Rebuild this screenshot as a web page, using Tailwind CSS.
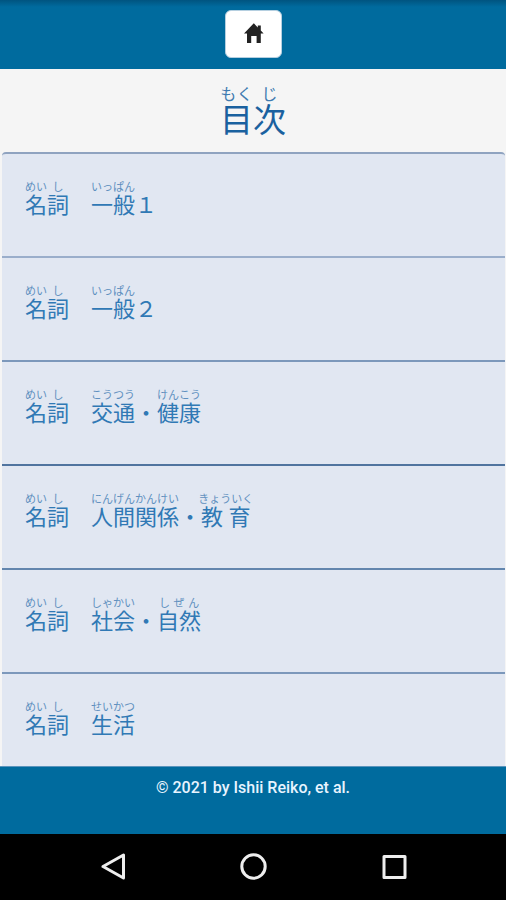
<!DOCTYPE html>
<html lang="ja">
<head>
    <meta charset="UTF-8">
    <meta name="viewport" content="width=device-width, initial-scale=1.0">
    <title>目次</title>
    <script src="https://cdn.jsdelivr.net/npm/@tailwindcss/browser@4"></script>
</head>
<body class="flex flex-col h-screen overflow-hidden bg-[#f5f5f5] font-['Roboto','Noto_Sans_CJK_JP',sans-serif]">

    <!-- Header -->
    <header class="flex shrink-0 justify-center bg-linear-to-b from-[#005480] to-[#006b9e] to-10% pt-[10px] pb-[11px]">
        <button type="button" aria-label="ホーム" class="flex items-center justify-center w-[57px] h-12 bg-white border border-[#b5cfe0] rounded-md">
            <svg class="w-6 h-6 text-[#222]" viewBox="0 0 24 24" fill="currentColor">
                <path d="M6 21V11.5H3L12.8 1.2l4 4.2V3.4h3v5.2l2.8 2.9h-2.8V21h-4.2v-7h-5.4v7z"/>
            </svg>
        </button>
    </header>

    <!-- Title -->
    <h1 class="shrink-0 h-[83px] pt-[30px] text-center text-[33px] leading-[44px] text-[#1a619f]">
        <ruby>目<rt class="text-[16px] leading-5 text-[#3f7bb0]">もく</rt></ruby><ruby>次<rt class="text-[16px] leading-5 text-[#3f7bb0]">じ</rt></ruby>
    </h1>

    <!-- Contents -->
    <main class="flex-1 min-h-0 overflow-hidden pl-[2px] pr-px">
        <ul class="text-[22px] leading-8 text-[#3079b5] rounded-t border-t-2 border-[#8fa3c0] bg-[#e1e7f2] overflow-hidden">
            <li class="border-b-2 border-[#9aaecb]">
                <a href="#" class="block h-[102px] px-[23px] pt-9"><ruby>名<rt class="text-[11px] leading-3 text-[#5f90bf]">めい</rt></ruby><ruby>詞<rt class="text-[11px] leading-3 text-[#5f90bf]">し</rt></ruby>　<ruby>一般<rt class="text-[11px] leading-3 text-[#5f90bf]">いっぱん</rt></ruby>１</a>
            </li>
            <li class="border-b-2 border-[#7c98bb]">
                <a href="#" class="block h-[102px] px-[23px] pt-9"><ruby>名<rt class="text-[11px] leading-3 text-[#5f90bf]">めい</rt></ruby><ruby>詞<rt class="text-[11px] leading-3 text-[#5f90bf]">し</rt></ruby>　<ruby>一般<rt class="text-[11px] leading-3 text-[#5f90bf]">いっぱん</rt></ruby>２</a>
            </li>
            <li class="border-b-2 border-[#50749f]">
                <a href="#" class="block h-[102px] px-[23px] pt-9"><ruby>名<rt class="text-[11px] leading-3 text-[#5f90bf]">めい</rt></ruby><ruby>詞<rt class="text-[11px] leading-3 text-[#5f90bf]">し</rt></ruby>　<ruby>交通<rt class="text-[11px] leading-3 text-[#5f90bf]">こうつう</rt></ruby>・<ruby>健康<rt class="text-[11px] leading-3 text-[#5f90bf]">けんこう</rt></ruby></a>
            </li>
            <li class="border-b-2 border-[#6386ae]">
                <a href="#" class="block h-[102px] px-[23px] pt-9"><ruby>名<rt class="text-[11px] leading-3 text-[#5f90bf]">めい</rt></ruby><ruby>詞<rt class="text-[11px] leading-3 text-[#5f90bf]">し</rt></ruby>　<ruby>人間関係<rt class="text-[11px] leading-3 text-[#5f90bf]">にんげんかんけい</rt></ruby>・<ruby>教育<rt class="text-[11px] leading-3 text-[#5f90bf]">きょういく</rt></ruby></a>
            </li>
            <li class="border-b-2 border-[#7c98bb]">
                <a href="#" class="block h-[102px] px-[23px] pt-9"><ruby>名<rt class="text-[11px] leading-3 text-[#5f90bf]">めい</rt></ruby><ruby>詞<rt class="text-[11px] leading-3 text-[#5f90bf]">し</rt></ruby>　<ruby>社会<rt class="text-[11px] leading-3 text-[#5f90bf]">しゃかい</rt></ruby>・<ruby>自然<rt class="text-[11px] leading-3 text-[#5f90bf]">しぜん</rt></ruby></a>
            </li>
            <li>
                <a href="#" class="block h-[102px] px-[23px] pt-9"><ruby>名<rt class="text-[11px] leading-3 text-[#5f90bf]">めい</rt></ruby><ruby>詞<rt class="text-[11px] leading-3 text-[#5f90bf]">し</rt></ruby>　<ruby>生活<rt class="text-[11px] leading-3 text-[#5f90bf]">せいかつ</rt></ruby></a>
            </li>
        </ul>
    </main>

    <!-- Footer -->
    <footer class="shrink-0 h-[68px] pt-[11px] bg-[#006b9e] border-t border-[#5a94bd] text-center text-base leading-5 font-medium text-[#e8f4ff]">
        © 2021 by Ishii Reiko, et al.
    </footer>

    <!-- Navigation bar -->
    <nav class="grid shrink-0 grid-cols-[1fr_auto_1fr] gap-28 items-center h-[66px] bg-black text-[#eee]">
        <button type="button" aria-label="戻る" class="justify-self-end">
            <svg class="w-7 h-7" viewBox="0 0 28 28" fill="none" stroke="currentColor" stroke-width="3" stroke-linejoin="round">
                <path d="M24.5 2v23L4 13.5z"/>
            </svg>
        </button>
        <button type="button" aria-label="ホーム画面">
            <svg class="w-7 h-7" viewBox="0 0 28 28" fill="none" stroke="currentColor" stroke-width="3">
                <circle cx="14.5" cy="13.5" r="11.7"/>
            </svg>
        </button>
        <button type="button" aria-label="アプリ一覧" class="justify-self-start">
            <svg class="w-7 h-7" viewBox="0 0 28 28" fill="none" stroke="currentColor" stroke-width="3" stroke-linejoin="round">
                <path d="M5 3.5h21v21H5z"/>
            </svg>
        </button>
    </nav>

</body>
</html>
